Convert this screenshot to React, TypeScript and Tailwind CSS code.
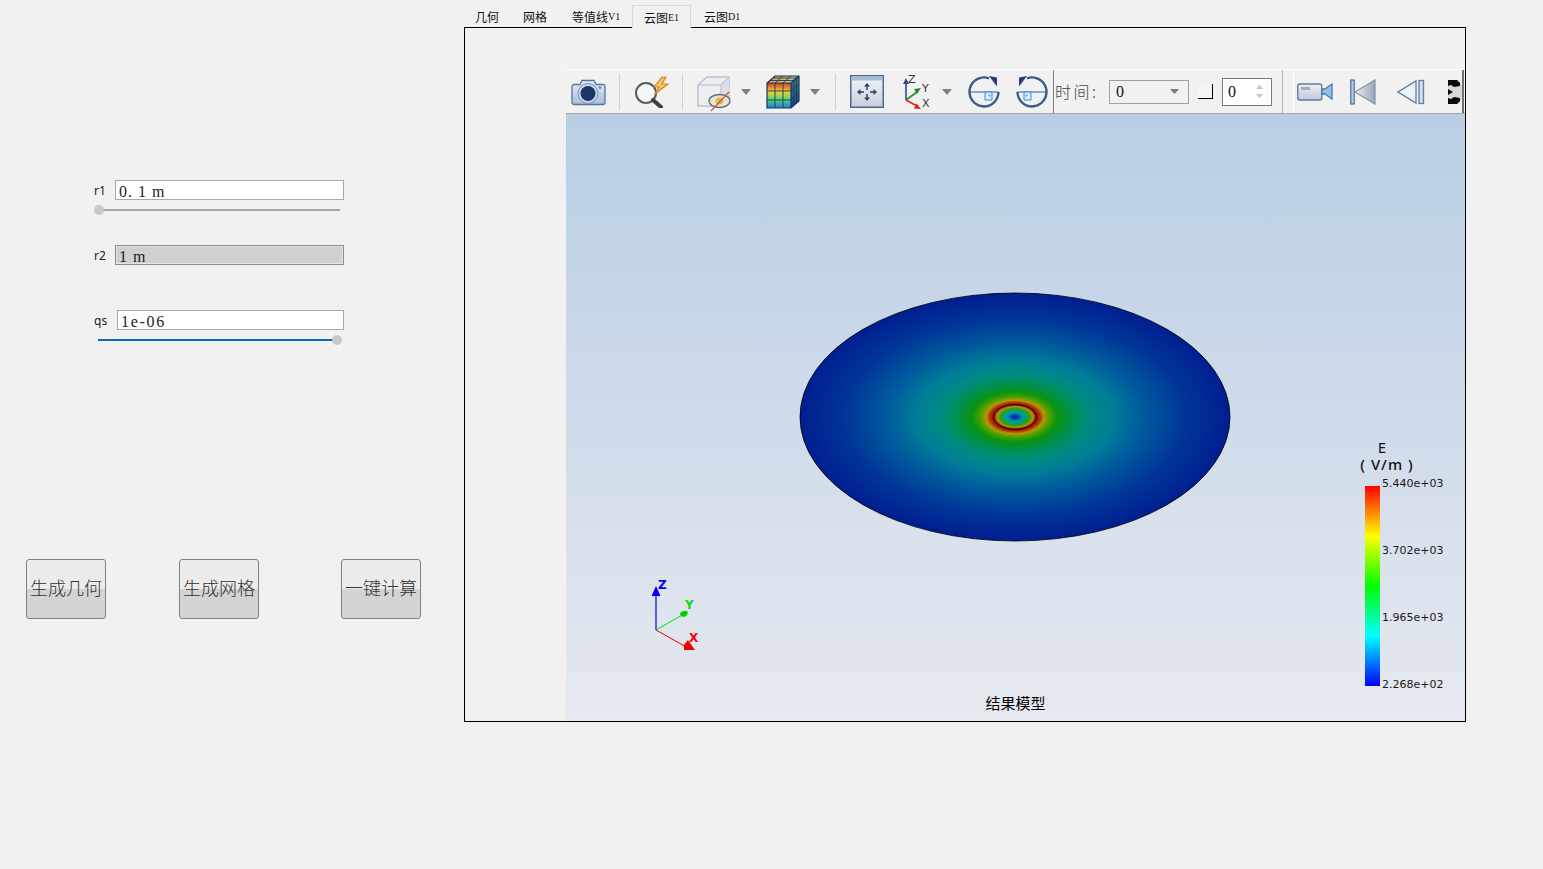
import React from 'react';

const cjk = "font-['Noto_Sans_CJK_SC',sans-serif]";
const serif = "font-['Liberation_Serif','Noto_Sans_CJK_SC',serif]";

function CameraIcon() {
  return (
    <svg width="35" height="28" viewBox="0 0 35 28" className="shrink-0">
      <defs>
        <linearGradient id="camBody" x1="0" y1="0" x2="0" y2="1">
          <stop offset="0" stopColor="#e4ecf6" />
          <stop offset="1" stopColor="#a9bfdc" />
        </linearGradient>
      </defs>
      <path d="M1 8.500a2 2 0 0 1 2-2h6l2-4h12l2 4h7a2 2 0 0 1 2 2v16a2 2 0 0 1-2 2H3a2 2 0 0 1-2-2z" fill="url(#camBody)" stroke="#56749c" strokeWidth="1.300" />
      <circle cx="17" cy="15.500" r="10" fill="#c7d5e8" stroke="#7d94b4" />
      <circle cx="17" cy="15.500" r="7.500" fill="#1d3567" />
      <circle cx="29" cy="9.500" r="1.300" fill="#5e7ba3" />
    </svg>
  );
}

function SearchFlashIcon() {
  return (
    <svg width="36" height="32" viewBox="0 0 36 32" className="shrink-0">
      <circle cx="12" cy="17" r="10" fill="#f4f6f8" stroke="#5a5a5a" strokeWidth="2" />
      <path d="M19 24l8 7" stroke="#3e3e3e" strokeWidth="4" strokeLinecap="round" />
      <path d="M28 1l-8 10h5l-4 7 13-10h-6l4-7z" fill="#f6c266" stroke="#d9811f" strokeWidth="1.200" strokeLinejoin="round" />
    </svg>
  );
}

function CubeEyeIcon() {
  return (
    <svg width="35" height="36" viewBox="0 0 35 36" className="shrink-0">
      <path d="M1 9l9-8h22v21l-8 8H1z" fill="#eceef2" stroke="#bcc4d0" strokeWidth="1.500" />
      <path d="M24 9l8-8v21l-8 8z" fill="#dbdfe6" />
      <path d="M1 9h23v21M24 9l8-8" fill="none" stroke="#c4cad6" strokeWidth="1.500" />
      <ellipse cx="22.500" cy="25" rx="10.500" ry="6.500" fill="#e8e4c8" stroke="#5f6c82" strokeWidth="1.300" />
      <ellipse cx="22.500" cy="25" rx="4" ry="3.500" fill="#d8b860" />
      <path d="M14 35L32 16" stroke="#cf5a3a" strokeWidth="1.300" />
    </svg>
  );
}

function ColorCubeIcon() {
  return (
    <svg width="34" height="34" viewBox="0 0 34 34" className="shrink-0">
      <defs>
        <linearGradient id="cubeFront" x1="0" y1="0" x2="0" y2="1">
          <stop offset="0" stopColor="#d83b2a" />
          <stop offset="0.350" stopColor="#f0d030" />
          <stop offset="0.650" stopColor="#52d870" />
          <stop offset="1" stopColor="#1f7ae0" />
        </linearGradient>
        <linearGradient id="cubeTop" x1="0" y1="0" x2="1" y2="0">
          <stop offset="0" stopColor="#e89a52" />
          <stop offset="1" stopColor="#b4dc8a" />
        </linearGradient>
        <linearGradient id="cubeSide" x1="0" y1="0" x2="0" y2="1">
          <stop offset="0" stopColor="#2f8f6a" />
          <stop offset="1" stopColor="#103f9a" />
        </linearGradient>
      </defs>
      <path d="M1 8L9 1h24L25 8z" fill="url(#cubeTop)" />
      <rect x="1" y="8" width="24" height="25" fill="url(#cubeFront)" />
      <path d="M25 8l8-7v25l-8 7z" fill="url(#cubeSide)" />
      <path d="M9 8v25M17 8v25M1 16h24M1 25h24M4 5.500h24M7 3h24M9 8l8-7M17 8l8-7M28 4v25M30.500 2v25M25 16l8-7M25 25l8-7" stroke="#24385f" strokeWidth="0.900" fill="none" />
      <path d="M1 8L9 1h24v25l-8 7H1zM25 8v25M1 8h24M25 8l8-7" fill="none" stroke="#1c3160" strokeWidth="1.200" />
    </svg>
  );
}

function FitIcon() {
  return (
    <svg width="34" height="33" viewBox="0 0 34 33" className="shrink-0">
      <defs>
        <linearGradient id="fitBg" x1="0" y1="0" x2="0" y2="1">
          <stop offset="0" stopColor="#f4f5f8" />
          <stop offset="1" stopColor="#c8cedb" />
        </linearGradient>
      </defs>
      <rect x="0.750" y="0.750" width="32.500" height="31.500" fill="url(#fitBg)" stroke="#51698e" strokeWidth="1.500" />
      <rect x="1.500" y="1.500" width="31" height="4" fill="#a6bad6" />
      <path d="M17 10v5M17 19v5M10 17h4M20 17h4" stroke="#27406c" strokeWidth="1.500" />
      <path d="M17 8l-3 3.500h6zM17 26l-3-3.500h6zM7 17l3.500-3v6zM27 17l-3.500-3v6z" fill="#27406c" />
    </svg>
  );
}

function AxesIcon() {
  return (
    <svg width="27" height="36" viewBox="0 0 27 36" className="shrink-0">
      <path d="M3 26V9" stroke="#2c4f9a" strokeWidth="1.600" />
      <path d="M3 4l-3 6h6z" fill="#2c4f9a" />
      <path d="M3 26L14 18" stroke="#1e8a40" strokeWidth="1.600" />
      <path d="M18 14l-7 1 3 5z" fill="#1e8a40" />
      <path d="M3 26l11 6" stroke="#e02020" strokeWidth="1.600" />
      <path d="M18 35l-7-.5 2.500-5z" fill="#e02020" />
      <text x="5" y="9" fontSize="11" fontFamily="DejaVu Sans" fill="#333">Z</text>
      <text x="19" y="18" fontSize="11" fontFamily="DejaVu Sans" fill="#333">Y</text>
      <text x="19" y="33" fontSize="11" fontFamily="DejaVu Sans" fill="#333">X</text>
    </svg>
  );
}

function RotateIcon({ flip = false }: { flip?: boolean }) {
  return (
    <svg width="32" height="32" viewBox="0 0 32 32" className={`shrink-0 ${flip ? '-scale-x-100' : ''}`}>
      <path d="M1.500 16h29" stroke="#3a8ad0" strokeWidth="1.300" />
      <path d="M17 16h7v8h-7z" fill="#dcebf8" stroke="#3a8ad0" strokeWidth="1" />
      <path d="M20 19h2v2" fill="none" stroke="#3a8ad0" strokeWidth="0.800" />
      <path d="M21 2.300A14.500 14.500 0 1 0 30.500 16" fill="none" stroke="#3f5c86" strokeWidth="2.400" />
      <path d="M21 0l8 1.500 0 9z" fill="#27406c" />
    </svg>
  );
}

function DropArrow() {
  return (
    <svg width="10" height="6" viewBox="0 0 10 6" className="shrink-0">
      <path d="M0 0h10L5 6z" fill="#808080" />
    </svg>
  );
}

function VideoIcon() {
  return (
    <svg width="36" height="20" viewBox="0 0 36 20" className="shrink-0">
      <defs>
        <linearGradient id="videoBody" x1="0" y1="0" x2="0" y2="1">
          <stop offset="0" stopColor="#eef0f5" />
          <stop offset="1" stopColor="#bcc8da" />
        </linearGradient>
      </defs>
      <rect x="0.750" y="2" width="24" height="16" rx="2" fill="url(#videoBody)" stroke="#5f7ca4" strokeWidth="1.400" />
      <rect x="4" y="5" width="9" height="3" fill="#a4adba" />
      <path d="M25 7h3l7-5v15l-7-5h-3z" fill="#8fc3e8" stroke="#4f79a8" strokeWidth="1.300" />
    </svg>
  );
}

function SkipBackIcon() {
  return (
    <svg width="26" height="26" viewBox="0 0 26 26" className="shrink-0">
      <defs>
        <linearGradient id="skipFill" x1="0" y1="0" x2="1" y2="0">
          <stop offset="0" stopColor="#eef0f4" />
          <stop offset="1" stopColor="#98a4b6" />
        </linearGradient>
      </defs>
      <rect x="0.750" y="1" width="3.500" height="24" fill="#b8c8dc" stroke="#4f6f9a" strokeWidth="1.200" />
      <path d="M25 1v24L5 13z" fill="url(#skipFill)" stroke="#7f93b0" strokeWidth="1.200" />
    </svg>
  );
}

function StepBackIcon() {
  return (
    <svg width="28" height="26" viewBox="0 0 28 26" className="shrink-0">
      <path d="M19 2v22L1 13z" fill="#eef1f6" stroke="#5d7ca6" strokeWidth="1.300" />
      <rect x="22" y="1.500" width="4.500" height="23" fill="#d4dce8" stroke="#5d7ca6" strokeWidth="1.300" />
    </svg>
  );
}

function ClippedPlayIcon() {
  return (
    <svg width="14" height="24" viewBox="0 0 14 24" className="shrink-0">
      <rect width="14" height="24" fill="#d8d8d8" />
      <path d="M0 0h9l3 3v3l-6 1-3-2-3 1zM0 24h9l3-3v-3l-6-1-3 2-3-1zM0 9l5 3-5 3z" fill="#0a0a0a" />
      <path d="M14 0v24h-3l3-6V6l-3-6z" fill="#f0f0f0" />
    </svg>
  );
}

function Separator() {
  return <div className="h-9 w-px shrink-0 bg-[#d2d2d2]" />;
}

function Toolbar() {
  return (
    <div className="flex h-[45px] items-center border-t border-b border-t-white border-b-[#a6a6a6] bg-[#f1f1f1]">
      <div className="ml-[5px]"><CameraIcon /></div>
      <div className="ml-[13px]"><Separator /></div>
      <div className="ml-[14px]"><SearchFlashIcon /></div>
      <div className="ml-[12px]"><Separator /></div>
      <div className="ml-[14px] mt-1"><CubeEyeIcon /></div>
      <div className="ml-[9px]"><DropArrow /></div>
      <div className="ml-[15px]"><ColorCubeIcon /></div>
      <div className="ml-[10px]"><DropArrow /></div>
      <div className="ml-[15px]"><Separator /></div>
      <div className="ml-[14px]"><FitIcon /></div>
      <div className="ml-[19px]"><AxesIcon /></div>
      <div className="ml-[12px]"><DropArrow /></div>
      <div className="ml-[16px]"><RotateIcon /></div>
      <div className="ml-[16px]"><RotateIcon flip /></div>
      <div className="ml-[5px] h-full w-px shrink-0 bg-[#808080]" />
      <span className={`ml-px w-11 shrink-0 pb-[2px] text-[16px] leading-none font-light tracking-[2.500px] whitespace-nowrap text-[#444] ${cjk}`}>时间:</span>
      <div className="ml-[10px] flex h-6 w-20 shrink-0 items-center justify-between border border-[#a0a0a0] bg-[#f1f1f1] pr-[9px] pl-[6px]">
        <span className={`text-[16px] leading-none text-[#111] ${serif}`}>0</span>
        <svg width="9" height="5" viewBox="0 0 9 5"><path d="M0 0h9L4.500 5z" fill="#7a7a7a" /></svg>
      </div>
      <div className="ml-[9px] h-[15px] w-[15px] shrink-0 border-r border-b border-r-black border-b-black bg-[#f4f4f4]" />
      <div className="ml-[9px] flex h-7 w-[50px] shrink-0 items-center justify-between border border-[#7a7a7a] bg-white pr-2 pl-[5px]">
        <span className={`text-[16px] leading-none text-[#111] ${serif}`}>0</span>
        <div className="flex flex-col gap-[5px]">
          <svg width="7" height="4" viewBox="0 0 7 4"><path d="M0 4h7L3.500 0z" fill="#c4c4c4" /></svg>
          <svg width="7" height="4" viewBox="0 0 7 4"><path d="M0 0h7L3.500 4z" fill="#c4c4c4" /></svg>
        </div>
      </div>
      <div className="ml-[10px] h-full w-px shrink-0 bg-[#b0b0b0]" />
      <div className="ml-[10px] flex h-full w-[171px] shrink-0 items-center overflow-hidden border-r-2 border-l border-r-[#707070] border-l-white bg-[#f1f1f1] pl-[3px]">
        <VideoIcon />
        <div className="ml-[17px]"><SkipBackIcon /></div>
        <div className="ml-[21px]"><StepBackIcon /></div>
        <div className="ml-[23px]"><ClippedPlayIcon /></div>
      </div>
    </div>
  );
}

// scalar field on the disk: rises inside r1, drops off as 1/r outside it
function FieldDisk() {
  const stops: [number, string][] = [
    [0, '#0028a0'],
    [0.016, '#0048b0'],
    [0.035, '#0098a8'],
    [0.055, '#0ca060'],
    [0.07, '#30a010'],
    [0.082, '#b09a00'],
    [0.092, '#b03a0a'],
    [0.1, '#a80c0c'],
    [0.116, '#b0300a'],
    [0.135, '#b49800'],
    [0.16, '#50a000'],
    [0.2, '#0a9410'],
    [0.26, '#009048'],
    [0.34, '#008c80'],
    [0.46, '#007c98'],
    [0.6, '#005a9c'],
    [0.8, '#003498'],
    [1, '#001e90'],
  ];
  return (
    <svg width="432" height="250" viewBox="0 0 432 250" className="block">
      <defs>
        <radialGradient id="field" cx="0.5" cy="0.5" r="0.5">
          {stops.map(([offset, color]) => (
            <stop key={offset} offset={offset} stopColor={color} />
          ))}
        </radialGradient>
      </defs>
      <ellipse cx="216" cy="125" rx="215" ry="124" fill="url(#field)" stroke="#000000" strokeWidth="0.800" />
      <ellipse cx="216" cy="125" rx="21.500" ry="12.400" fill="none" stroke="#100808" strokeWidth="1" />
    </svg>
  );
}

function Triad() {
  return (
    <svg width="50" height="76" viewBox="0 0 50 76">
      <path d="M6 51V9" stroke="#0000f0" strokeWidth="1.200" />
      <path d="M6 7l-4.500 10h9z" fill="#0000f0" />
      <path d="M6 51L34 35" stroke="#00e000" strokeWidth="1" />
      <path d="M30 34q5-4 8-1-1 5-5 5-3-1-3-4z" fill="#00d000" />
      <path d="M6 51l32 18" stroke="#f00000" strokeWidth="1" />
      <path d="M34 66l4-5 7 10-11 0z" fill="#f00000" />
      <text x="8" y="10" fontSize="12" fontWeight="700" fontFamily="DejaVu Sans" fill="#0000f0">Z</text>
      <text x="35" y="30" fontSize="12" fontWeight="700" fontFamily="DejaVu Sans" fill="#00e000">Y</text>
      <text x="39" y="63" fontSize="12" fontWeight="700" fontFamily="DejaVu Sans" fill="#f00000">X</text>
    </svg>
  );
}

function Legend() {
  const labels = ['5.440e+03', '3.702e+03', '1.965e+03', '2.268e+02'];
  return (
    <div className="absolute top-[325px] left-[794px] flex w-[90px] flex-col">
      <div className="w-[54px] text-center font-['Noto_Sans',sans-serif] text-[15px] leading-[17px] font-medium text-[#111]">
        <div className="pr-[10px] font-normal">E</div>
        <div className="tracking-[1px] whitespace-pre">( V/m )</div>
      </div>
      <div className="mt-[13px] ml-[5px] flex">
        <div className="h-[200px] w-[15px] shrink-0 bg-[linear-gradient(to_bottom,#ff0000,#ffff00_25%,#00ff00_50%,#00ffff_75%,#0000ff)]" />
        <div className="-mt-[10px] flex h-[217px] flex-col justify-between pl-[2px] font-['DejaVu_Sans',sans-serif] text-[11px] leading-[16px] text-[#1a1a1a]">
          {labels.map((label) => (
            <span key={label}>{label}</span>
          ))}
        </div>
      </div>
    </div>
  );
}

function Viewport() {
  return (
    <div className="relative h-[607px] w-[899px] bg-[linear-gradient(to_bottom,#b9cee5,#e6e9ef)]">
      <div className="absolute top-[178px] left-[233px]"><FieldDisk /></div>
      <div className="absolute top-[465px] left-[84px]"><Triad /></div>
      <Legend />
      <div className={`absolute bottom-2 left-0 w-full text-center text-[15px] leading-[20px] text-black ${cjk}`}>结果模型</div>
    </div>
  );
}

function TextField({ value, className, disabled = false }: { value: string; className: string; disabled?: boolean }) {
  const tone = disabled
    ? 'border-[#8c8c8c] bg-[#d0d0d0] shadow-[inset_0_0_0_1px_#e4e4e4]'
    : 'border-[#a8a8a8] bg-white';
  return (
    <div className={`flex h-5 items-center border pt-[3px] pl-[3px] ${tone}`}>
      <span className={`text-[16px] leading-none whitespace-pre text-[#222] ${serif} ${className}`}>{value}</span>
    </div>
  );
}

function FieldRow({ label, labelWidth, children }: { label: string; labelWidth: string; children: React.ReactNode }) {
  return (
    <div className="flex items-center">
      <span className={`shrink-0 pt-[2px] font-['Noto_Sans',sans-serif] text-[12px] leading-none text-[#222] ${labelWidth}`}>{label}</span>
      <div className="grow">{children}</div>
    </div>
  );
}

function ActionButton({ text }: { text: string }) {
  return (
    <button
      type="button"
      className={`flex h-[60px] w-20 shrink-0 items-center justify-center rounded-[3px] border border-[#808080] bg-[linear-gradient(to_bottom,#ececec_50%,#d4d4d4_50%)] pb-[3px] text-[18px] font-light whitespace-nowrap text-[#333] ${cjk}`}
    >
      {text}
    </button>
  );
}

function LeftPanel() {
  return (
    <div className="flex h-full w-[464px] shrink-0 flex-col pt-[180px]">
      <div className="w-[344px] pl-[94px]">
        <FieldRow label="r1" labelWidth="w-[21px]">
          <TextField value="0. 1 m" className="tracking-[1px]" />
        </FieldRow>
        <div className="relative mt-[9px] ml-[4px] h-0.5 w-[242px] bg-[#a8a8a8]">
          <div className="absolute -top-1 -left-1 h-[10px] w-[10px] rounded-full bg-[#c8c8c8]" />
        </div>
        <div className="mt-[34px]">
          <FieldRow label="r2" labelWidth="w-[21px]">
            <TextField value="1 m" className="tracking-[1px]" disabled />
          </FieldRow>
        </div>
        <div className="mt-[45px]">
          <FieldRow label="qs" labelWidth="w-[23px]">
            <TextField value="1e-06" className="tracking-[1.700px]" />
          </FieldRow>
        </div>
        <div className="relative mt-[9px] ml-[4px] h-0.5 w-[240px] bg-[#0a68b8]">
          <div className="absolute -top-1 -right-[4px] h-[10px] w-[10px] rounded-full bg-[#c8c8c8]" />
        </div>
      </div>
      <div className="mt-[218px] flex pl-[26px]">
        <ActionButton text="生成几何" />
        <div className="ml-[73px]"><ActionButton text="生成网格" /></div>
        <div className="ml-[82px]"><ActionButton text="一键计算" /></div>
      </div>
    </div>
  );
}

function Tab({ text, suffix, className }: { text: string; suffix?: string; className: string }) {
  return (
    <div className={`flex h-[22px] shrink-0 items-center pt-[2px] text-[12px] leading-none whitespace-nowrap text-[#111] ${cjk} ${className}`}>
      {text}
      {suffix && <span className={`text-[10px] ${serif}`}>{suffix}</span>}
    </div>
  );
}

function RightPanel() {
  return (
    <div className="flex flex-col pt-[5px]">
      <div className="flex h-[22px] items-start">
        <Tab text="几何" className="ml-[11px] w-6" />
        <Tab text="网格" className="ml-6 w-6" />
        <Tab text="等值线" suffix="V1" className="ml-[25px] w-[50px]" />
        <div className="relative z-10 ml-[10px] flex h-[23px] w-[59px] items-start justify-center border-x border-t border-[#d9d9d9] bg-[#f1f1f1]">
          <Tab text="云图" suffix="E1" className="" />
        </div>
        <Tab text="云图" suffix="D1" className="ml-[13px] w-10" />
      </div>
      <div className="h-[695px] w-[1002px] border border-black bg-[#f1f1f1] pt-[41px] pl-[101px]">
        <Toolbar />
        <Viewport />
      </div>
    </div>
  );
}

export default function App() {
  return (
    <div className="flex h-[869px] w-[1543px] overflow-hidden bg-[#f1f1f1]">
      <LeftPanel />
      <RightPanel />
    </div>
  );
}
